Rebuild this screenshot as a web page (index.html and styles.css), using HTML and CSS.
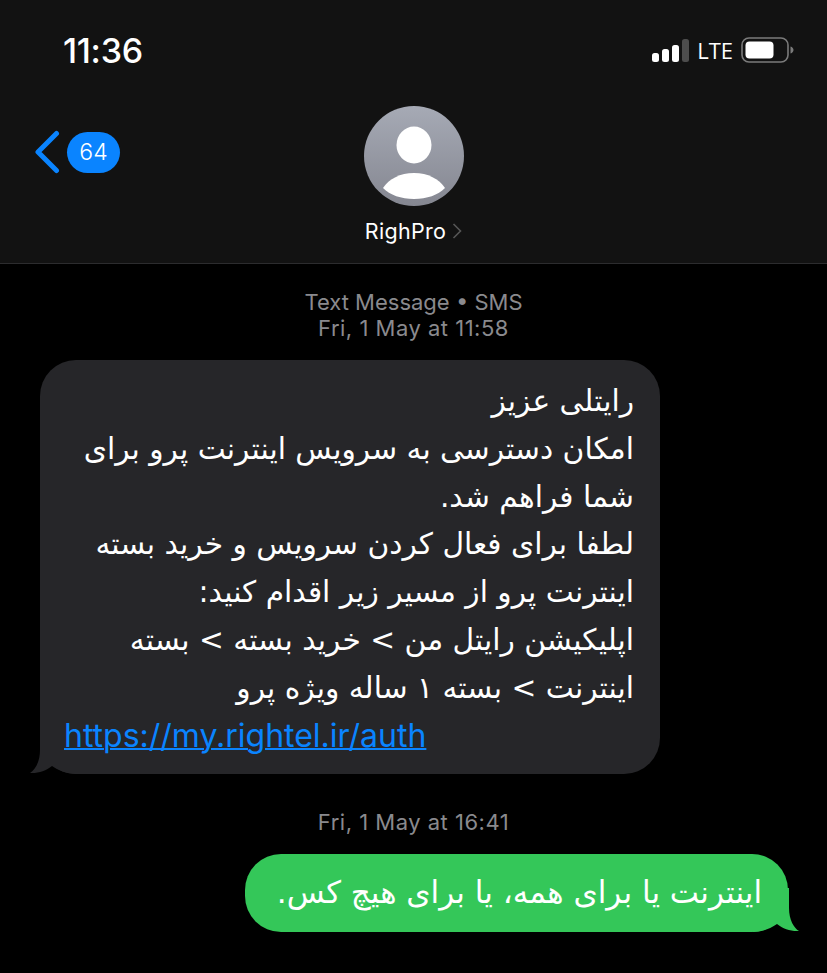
FILE: index.html
```html
<!DOCTYPE html>
<html lang="fa">
<head>
<meta charset="utf-8">
<title>Messages</title>
<link rel="stylesheet" href="styles.css">
</head>
<body>
<header class="header">
  <div class="status">
    <span class="time">11:36</span>
    <div class="status-right">
      <svg class="signal" width="37" height="24" viewBox="0 0 37 24">
        <rect x="0" y="14" width="7" height="9" rx="2.5" fill="#fff"/>
        <rect x="10" y="10" width="7" height="13" rx="2.5" fill="#fff"/>
        <rect x="20" y="6" width="7" height="17" rx="2.5" fill="#fff"/>
        <rect x="30" y="0" width="7" height="23" rx="2.5" fill="#4d4d4d"/>
      </svg>
      <span class="lte">LTE</span>
      <svg class="battery" width="53" height="26" viewBox="0 0 53 26">
        <rect x="1" y="1" width="46" height="24" rx="7" fill="none" stroke="#7b7b7b" stroke-width="1.6"/>
        <rect x="4.500" y="4.500" width="28" height="17" rx="4" fill="#fff"/>
        <path d="M49.500 9.500c2 .6 3 2 3 3.500s-1 2.900-3 3.500z" fill="#7b7b7b"/>
      </svg>
    </div>
  </div>
  <div class="nav">
    <div class="back">
      <svg width="27" height="44" viewBox="0 0 27 44">
        <path d="M23.500 3.500 5 22l18.500 18.500" fill="none" stroke="#0a84ff" stroke-width="5" stroke-linecap="round" stroke-linejoin="round"/>
      </svg>
      <span class="badge">64</span>
    </div>
    <div class="contact">
      <svg class="avatar" width="100" height="100" viewBox="0 0 100 100">
        <defs>
          <linearGradient id="avatarFill" x1="0" y1="0" x2="0" y2="1">
            <stop offset="0" stop-color="#a6aab5"/>
            <stop offset="1" stop-color="#858791"/>
          </linearGradient>
        </defs>
        <circle cx="50" cy="50" r="50" fill="url(#avatarFill)"/>
        <ellipse cx="50" cy="39" rx="17.500" ry="18.500" fill="#fff"/>
        <path d="M19 82C25 73 36 67 50 67s25 6 31 15c-7 7-18 11-31 11S26 89 19 82z" fill="#fff"/>
      </svg>
      <div class="name-row">
        <span class="name">RighPro</span>
        <svg width="10" height="16" viewBox="0 0 10 16"><path d="M1.500 1l7 7-7 7" fill="none" stroke="#565656" stroke-width="1.600"/></svg>
      </div>
    </div>
  </div>
</header>
<main class="thread">
  <p class="meta meta-first">Text Message • SMS<br><span class="stamp">Fri, 1 May at 11:58</span></p>
  <div class="bubble incoming">
    <svg class="tail tail-in" width="46" height="44" viewBox="0 0 46 44"><path d="M10 0V20C10 32 5 40 0 43 8 43.500 16 41 22 36 28 40 36 44 46 44V0z" fill="#262629"/></svg>
    <div class="fa" dir="rtl">رایتلی عزیز<br>امکان دسترسی به سرویس اینترنت پرو برای<br>شما فراهم شد.<br>لطفا برای فعال کردن سرویس و خرید بسته<br>اینترنت پرو از مسیر زیر اقدام کنید:<br>اپلیکیشن رایتل من &gt; خرید بسته &gt; بسته<br>اینترنت &gt; بسته ۱ ساله ویژه پرو</div>
    <a class="link" href="#">https://my.rightel.ir/auth</a>
  </div>
  <p class="meta meta-second"><span class="stamp">Fri, 1 May at 16:41</span></p>
  <div class="bubble outgoing">
    <svg class="tail tail-out" width="46" height="44" viewBox="0 0 46 44"><path d="M36 0V20C36 32 41 40 46 43 38 43.500 30 41 24 36 18 40 10 44 0 44V0z" fill="#34c759"/></svg>
    <div class="fa fa-out" dir="rtl">اینترنت یا برای همه، یا برای هیچ کس.</div>
  </div>
</main>
</body>
</html>
```
FILE: styles.css
```css
* { box-sizing: border-box; }
html, body { margin: 0; height: 100%; }
body {
  width: 827px;
  height: 973px;
  overflow: hidden;
  background: #000;
  color: #fff;
  font-family: Inter, "Liberation Sans", sans-serif;
}
.header {
  height: 264px;
  background: #121212;
  border-bottom: 1px solid #2c2c2e;
  padding-top: 30px;
}
.status {
  display: flex;
  justify-content: space-between;
  align-items: center;
  height: 40px;
  padding: 0 33px 0 63px;
}
.time { font-size: 34px; font-weight: 500; letter-spacing: -0.3px; }
.status-right { display: flex; align-items: center; gap: 8px; }
.signal { margin-top: 2px; }
.lte { font-size: 22px; font-family: "Open Sans", sans-serif; }
.nav {
  position: relative;
  display: flex;
  justify-content: center;
  padding-top: 36px;
}
.back {
  position: absolute;
  left: 33px;
  top: 60px;
  display: flex;
  align-items: center;
  gap: 7px;
}
.badge {
  width: 53px;
  height: 41px;
  border-radius: 20.500px;
  background: #0a84ff;
  font-size: 23px;
  font-weight: 300;
  display: flex;
  align-items: center;
  justify-content: center;
}
.contact { display: flex; flex-direction: column; align-items: center; }
.avatar { display: block; }
.name-row {
  display: flex;
  align-items: center;
  gap: 6px;
  margin-top: 12px;
  height: 26px;
}
.name { font-size: 21.500px; letter-spacing: 0.3px; }
.thread { padding: 0 0 0 40px; }
.meta {
  margin: 0;
  font-size: 22px;
  line-height: 26px;
  text-align: center;
  color: #8a8a8e;
  width: 747px;
}
.stamp { letter-spacing: 0.5px; }
.meta-first { padding-top: 25px; }
.meta-second { padding-top: 35px; }
.bubble { position: relative; font-family: "DejaVu Sans", sans-serif; }
.fa { position: relative; font-size: 29.700px; line-height: 47.800px; }
.fa-out { font-size: 31px; }
.incoming {
  width: 620px;
  height: 414px;
  margin-top: 19px;
  padding: 17px 26px 0 24px;
  background: #262629;
  border-radius: 36px;
}
.link {
  position: relative;
  display: block;
  font-family: Inter, sans-serif;
  font-size: 32px;
  line-height: 48px;
  color: #0a84ff;
  text-decoration: underline;
  text-decoration-thickness: 2px;
}
.outgoing {
  width: 543px;
  height: 78px;
  margin: 19px 0 0 205px;
  padding: 15px 26px 0 26px;
  background: #34c759;
  border-radius: 36px;
}
.tail { position: absolute; bottom: 0; }
.tail-in { left: -10px; }
.tail-out { right: -11px; }
```
